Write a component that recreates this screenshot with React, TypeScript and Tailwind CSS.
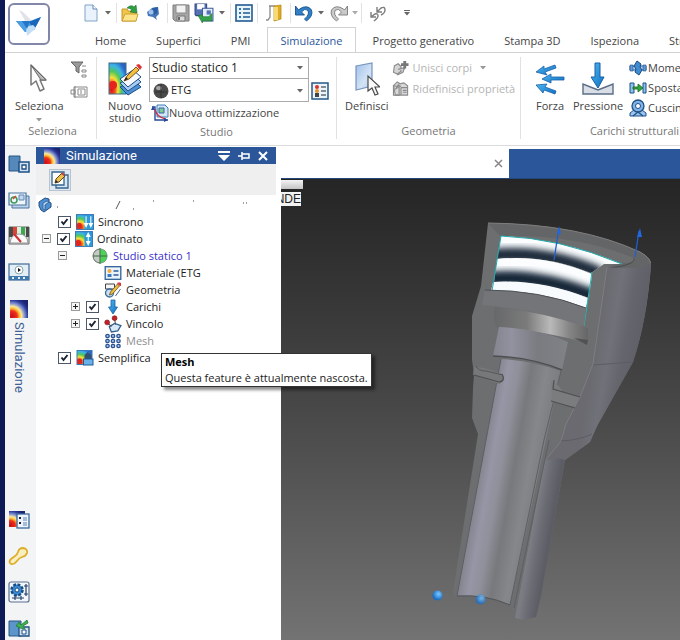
import { useState, type ReactNode } from 'react';

type IconProps = { className?: string };

const Caret = ({ className = 'text-[#666]' }: IconProps) => (
  <svg viewBox="0 0 6 4" className={`w-1.5 h-1 shrink-0 ${className}`}>
    <path d="M0 0h6L3 3.5z" fill="currentColor" />
  </svg>
);

// shared gradients, referenced by id from every icon
const Defs = () => (
  <svg className="w-0 h-0 absolute" aria-hidden="true">
    <defs>
      <radialGradient id="heat" cx="0.15" cy="0.85" r="1">
        <stop offset="0" stopColor="#d8121a" />
        <stop offset="0.2" stopColor="#f04a1c" />
        <stop offset="0.38" stopColor="#f6e23a" />
        <stop offset="0.58" stopColor="#4fc65a" />
        <stop offset="0.78" stopColor="#3bb4e8" />
        <stop offset="1" stopColor="#2b62c8" />
      </radialGradient>
      <radialGradient id="heatDark" cx="0.1" cy="0.9" r="1.05">
        <stop offset="0" stopColor="#c8101a" />
        <stop offset="0.28" stopColor="#f0301c" />
        <stop offset="0.4" stopColor="#fbb52e" />
        <stop offset="0.52" stopColor="#f8e89a" />
        <stop offset="0.68" stopColor="#7f8fd0" />
        <stop offset="0.85" stopColor="#2b3a9c" />
        <stop offset="1" stopColor="#1b2470" />
      </radialGradient>
      <linearGradient id="blue" x1="0" y1="0" x2="1" y2="1">
        <stop offset="0" stopColor="#4db8f2" />
        <stop offset="1" stopColor="#0f6fc0" />
      </linearGradient>
      <linearGradient id="glass" x1="0" y1="0" x2="1" y2="1">
        <stop offset="0" stopColor="#9fc0ea" />
        <stop offset="0.6" stopColor="#d3e3f6" />
        <stop offset="1" stopColor="#a9c6ec" />
      </linearGradient>
    </defs>
  </svg>
);

const LogoIcon = () => (
  <svg viewBox="0 0 36 36" className="w-9 h-9 shrink-0">
    <path d="M8 4l4 2 10 10-6 2z" fill="#dfe3e8" />
    <path d="M5 15l14 0-5 11z" fill="#2f8bdc" />
    <path d="M5 15h14l11-4-7 13-9 2z" fill="#4a9fe3" />
    <path d="M18 16l12-5-7 13z" fill="#1b66b8" />
    <path d="M15 21l7-2 3 3-9 8z" fill="#c3dff6" />
    <path d="M11 15h8l-3 8z" fill="#2277cb" />
  </svg>
);

const NewDocIcon = () => (
  <svg viewBox="0 0 14 18" className="w-3.5 h-4.5">
    <path d="M1 1h8l4 4v12H1z" fill="#eaf3fd" stroke="#7fa3c8" />
    <path d="M9 1v4h4" fill="#fff" stroke="#5f88b5" />
  </svg>
);

const OpenIcon = () => (
  <svg viewBox="0 0 18 18" className="w-4.5 h-4.5">
    <path d="M1 5h5l1 2h8v10H1z" fill="#f0c648" stroke="#c6962a" />
    <path d="M4 10h13l-2 7H1z" fill="#fbe489" stroke="#cfa236" />
    <path d="M6 4q4-4 7-1l2-2 1 8-7-1 2-2q-2-2-5-2z" fill="#2f9e41" stroke="#1c7030" strokeWidth=".6" />
  </svg>
);

const GlobeIcon = () => (
  <svg viewBox="0 0 14 14" className="w-3.5 h-3.5 shrink-0">
    <path d="M1 6l5-4 6-1 1 7-3 3 1 3-4-3-5-1z" fill="#4577b8" />
    <path d="M6 2l6-1-1 6-3 2z" fill="#2c5ea6" />
    <circle cx="5" cy="6" r="2.500" fill="#9ec2ea" />
  </svg>
);

const SaveIcon = () => (
  <svg viewBox="0 0 18 18" className="w-4.5 h-4.5">
    <path d="M1 1h16v16H3l-2-2z" fill="#a5a5a5" stroke="#7d7d7d" />
    <path d="M4 1h10v8H4z" fill="#f3f3f3" stroke="#8b8b8b" />
    <path d="M5 12h8v5H5z" fill="#dcdcdc" stroke="#777" />
    <path d="M6 13h2v3H6z" fill="#666" />
  </svg>
);

const SaveAsIcon = () => (
  <svg viewBox="0 0 19 19" className="w-5 h-5">
    <path d="M1 1h11v11H2l-1-1z" fill="#5570b4" stroke="#2f4684" />
    <path d="M3 1h7v5H3z" fill="#fff" />
    <path d="M8 5h10v12H8z" fill="#e5effb" stroke="#3b5a9c" />
    <path d="M12 7h4v4h-4z" fill="#4f72b8" />
    <path d="M4 12l4-1v2l6 0 3-3v7l-9 0v2z" fill="#35a34b" stroke="#1f7431" strokeWidth=".6" />
  </svg>
);

const ListIcon = () => (
  <svg viewBox="0 0 18 18" className="w-4.5 h-4.5">
    <rect x="1" y="1" width="16" height="16" fill="#eaf4fb" stroke="#235b91" strokeWidth="1.6" />
    <path d="M4 4h2v2H4zM4 8h2v2H4zM4 12h2v2H4z" fill="#2f74b5" />
    <path d="M8 5h7M8 9h7M8 13h7" stroke="#235b91" strokeWidth="1.3" />
  </svg>
);

const DoorIcon = () => (
  <svg viewBox="0 0 18 18" className="w-4.5 h-4.5">
    <path d="M4 2h6M5 2v11l-2 3H1" fill="none" stroke="#8a8a8a" strokeWidth="1.3" />
    <path d="M9 2l7-1v14l-7 2z" fill="#e0aa22" stroke="#b98b1d" strokeWidth=".8" />
    <path d="M9 3l4 0v13l-4 0z" fill="#f8da74" />
  </svg>
);

const UndoIcon = () => (
  <svg viewBox="0 0 19 18" className="w-5 h-4.5">
    <path d="M1 2v9h9l-3-3q3-4 6-2 3 4-3 9l2 2q7-5 5-11-4-6-12-1l-1 1z" fill="#2f80c8" stroke="#16508c" strokeWidth=".9" />
  </svg>
);

const RedoIcon = () => (
  <svg viewBox="0 0 19 18" className="w-5 h-4.5">
    <path d="M18 2v9H9l3-3q-3-4-6-2-3 4 3 9l-2 2Q0 12 2 6q4-6 12-1l1 1z" fill="#c9c9c9" stroke="#7a7a7a" strokeWidth=".9" />
  </svg>
);

const LinkArrowsIcon = () => (
  <svg viewBox="0 0 18 18" className="w-4.5 h-4.5" fill="none" stroke="#7d7d7d" strokeWidth="1.400">
    <path d="M8 3v5h5M8 8l4-4q4-2 4 2 0 3-4 5" />
    <path d="M2 8v5h5M2 13l4-3q3-1 3 2 0 2-4 5" />
  </svg>
);

const CursorIcon = () => (
  <svg viewBox="0 0 20 32" className="w-5 h-8">
    <path d="M2 2v20l5-4 4 10 4-2-4-9 6 0z" fill="#fdfdfd" stroke="#777" strokeWidth="1.5" strokeLinejoin="round" />
    <path d="M2 2l15 15-5 0z" fill="#b9b9b9" stroke="#666" />
  </svg>
);

const FilterIcon = () => (
  <svg viewBox="0 0 18 18" className="w-4.5 h-4.5">
    <path d="M1 1h12L9 6v6l-3-2V6z" fill="#9a9a9a" stroke="#666" />
    <path d="M12 5h4M12 9h4v2h-4zM12 14h4v2h-4z" fill="none" stroke="#888" />
  </svg>
);

const SelectBoxIcon = () => (
  <svg viewBox="0 0 18 14" className="w-4.5 h-3.5" fill="none" stroke="#888">
    <path d="M4 2h13v10H4zM8 4h7v6H8zM11 5v4M1 5h4v4H1zM5 1v12" />
  </svg>
);

const NewStudyIcon = () => (
  <svg viewBox="0 0 36 36" className="w-9 h-9">
    <rect x="2" y="2" width="17" height="31" fill="url(#heat)" stroke="#3f6a86" />
    <circle cx="6" cy="24" r="4" fill="#e52420" />
    <path d="M13 26l8 8 13-8-6-6z" fill="#4c8fd2" stroke="#1f4f8d" />
    <path d="M13 22l8 8 13-9-6-6z" fill="#a9cdf0" stroke="#1f4f8d" />
    <path d="M13 18l8 8 13-10-8-7z" fill="#f6fafe" stroke="#1f4f8d" />
    <path d="M17 20l3-5 9-9 3 3-10 9z" fill="#f4c044" stroke="#7c5618" />
    <path d="M17 20l2-4 2 2z" fill="#222" />
    <path d="M29 4l3-1 3 3-2 3z" fill="#e33030" />
  </svg>
);

const MaterialListIcon = () => (
  <svg viewBox="0 0 18 18" className="w-4.5 h-4.5">
    <rect x="1" y="1" width="16" height="16" fill="#e9f4fb" stroke="#255987" strokeWidth="1.5" />
    <circle cx="6" cy="5" r="2" fill="#d8342c" />
    <circle cx="6" cy="9" r="2" fill="#e8902c" />
    <path d="M4 11h4v4H4z" fill="#444" />
    <path d="M10 5h5M10 9h5M10 13h5" stroke="#222" />
  </svg>
);

const OptimizeIcon = () => (
  <svg viewBox="0 0 18 18" className="w-4.5 h-4.5">
    <path d="M1 3h3v13h13" fill="none" stroke="#27489a" strokeWidth="1.4" />
    <path d="M6 1h8l3 3v9H6z" fill="#d4e5f7" stroke="#3b7fb9" />
    <path d="M8 4h5v5H8z" fill="#7fcb8f" stroke="#3567a5" />
    <path d="M4 5q1 8 11 10" fill="none" stroke="#c92e3f" strokeWidth="1.4" />
    <path d="M0 6l2-4 2 4zM13 14l4 2-4 2z" fill="#27489a" />
  </svg>
);

const DefineIcon = () => (
  <svg viewBox="0 0 26 34" className="w-6.5 h-8.5">
    <path d="M2 4l16-3v23L2 28z" fill="url(#glass)" stroke="#7795bd" strokeWidth="1.2" />
    <path d="M14 14v15l4-3 3 7 3-1-3-7h5z" fill="#fafafa" stroke="#4a4a4a" strokeWidth="1.2" />
  </svg>
);

const JoinBodiesIcon = () => (
  <svg viewBox="0 0 18 17" className="w-4.5 h-4" fill="none" stroke="#8b8b8b" strokeWidth="1.2">
    <path d="M2 6l4-2 3 3v5l-4 3-4-2zM6 10l7-2-2 5-6 3" fill="#d4d4d4" />
    <path d="M13 1v8M9 5h8" stroke="#777" strokeWidth="3" />
  </svg>
);

const RedefineIcon = () => (
  <svg viewBox="0 0 18 17" className="w-4.5 h-4" fill="none" stroke="#8b8b8b" strokeWidth="1.2">
    <path d="M1 5l4-4 3 2 4-1 4 3v10H3z" fill="#d9d9d9" />
    <path d="M1 5l6 1v9H1zM9 7h7M9 7v8M11 10h4M11 12h4" />
    <path d="M3 9l3-5 3 2" fill="#999" />
  </svg>
);

const ForceIcon = () => (
  <svg viewBox="0 0 30 34" className="w-7.5 h-8.5" fill="url(#blue)" stroke="#1b5fa8" strokeWidth=".8">
    <path d="M1 10l8-6 0 3 11-4 1 3-11 4 2 3z" />
    <path d="M7 17l9-5v3h13v3H16v3z" />
    <path d="M1 23l11-1-2 3 11 4-1 3-11-4-1 3z" />
  </svg>
);

const PressureIcon = () => (
  <svg viewBox="0 0 32 34" className="w-8 h-8.5">
    <path d="M1 22v10h30V22l-10 4-5 2-5-2z" fill="#d9dde5" stroke="#5b6d86" strokeWidth="1.400" />
    <path d="M13 1h5v14h4l-6 11-7-11h4z" fill="url(#blue)" stroke="#1b5fa8" />
  </svg>
);

const MomentIcon = () => (
  <svg viewBox="0 0 18 16" className="w-4.5 h-4">
    <path d="M1 6h16v4H1z" fill="#bcd7f1" stroke="#28598f" />
    <path d="M8 1l4 3-1 3 2 3-3 5-4-3 1-3-2-3z" fill="#3f8bd2" stroke="#1b4c86" />
    <path d="M1 5h3v6H1zM14 5h3v6h-3z" fill="#5e9cd8" stroke="#1b4c86" strokeWidth=".6" />
  </svg>
);

const ShiftIcon = () => (
  <svg viewBox="0 0 18 16" className="w-4.5 h-4">
    <path d="M1 3h4v10H1zM14 3h3v10h-3z" fill="#8cc0ef" stroke="#1c4f86" />
    <path d="M4 7h5V4l5 4-5 4V9H4z" fill="#31a53c" stroke="#17691f" strokeWidth=".8" />
  </svg>
);

const BearingIcon = () => (
  <svg viewBox="0 0 18 18" className="w-4.5 h-4.5">
    <path d="M1 14l4-3h8l4 3v3H1z" fill="#9cc5ed" stroke="#1e4f88" />
    <circle cx="9" cy="7" r="6" fill="#7fb3e6" stroke="#1e4f88" strokeWidth="1.3" />
    <circle cx="9" cy="7" r="2.500" fill="#fff" stroke="#1e4f88" />
    <path d="M4 17l5-4 5 4" fill="none" stroke="#1e4f88" strokeWidth="1.3" />
  </svg>
);

const HeatIcon = ({ className = 'w-4.5 h-4' }: IconProps) => (
  <svg viewBox="0 0 18 18" preserveAspectRatio="none" className={className}>
    <rect width="18" height="18" fill="url(#heatDark)" />
  </svg>
);

const PartIcon = () => (
  <svg viewBox="0 0 14 16" className="w-3.5 h-4">
    <path d="M1 5l6-4 4 1v3l2 1v4l-7 5-3-2-2-4z" fill="#4f8fd0" stroke="#1d4c88" />
    <path d="M5 6l4-2 2 1-4 3v5l-2-1z" fill="#b4d4f2" stroke="#1d4c88" strokeWidth=".7" />
  </svg>
);

const SyncIcon = () => (
  <svg viewBox="0 0 17 15" className="w-4.5 h-4">
    <rect x=".5" y=".5" width="16" height="14" fill="url(#heat)" stroke="#3a79b8" />
    <rect x="8" y="1" width="8" height="13" fill="#2c9bdc" />
    <circle cx="3" cy="11" r="2.500" fill="#e0261e" />
    <path d="M9.500 2v9M14 2v9M8 9l1.500 3L11 9zM12.500 9L14 12l1.500-3z" stroke="#fff" fill="#fff" />
  </svg>
);

const OrderedIcon = () => (
  <svg viewBox="0 0 17 15" className="w-4.5 h-4">
    <rect x=".5" y=".5" width="16" height="14" fill="url(#heat)" stroke="#3a79b8" />
    <rect x="9" y="1" width="7" height="13" fill="#2c9bdc" />
    <circle cx="3" cy="11" r="2.500" fill="#e0261e" />
    <path d="M12.500 3v9M11 5l1.500-3L14 5zM11 10l1.500 3 1.500-3z" stroke="#fff" fill="#fff" />
  </svg>
);

const StudyIcon = () => (
  <svg viewBox="0 0 16 16" className="w-4.5 h-4">
    <circle cx="8" cy="8" r="7" fill="#c5c9c5" stroke="#5f6b60" />
    <path d="M8 1a7 7 0 0 1 0 14z" fill="#4fd05a" />
    <path d="M8 0v16M1 8h14" stroke="#3c6a40" />
  </svg>
);

const MaterialIcon = () => (
  <svg viewBox="0 0 17 14" className="w-4.5 h-3.5">
    <rect x=".7" y=".7" width="15.600" height="12.600" fill="#eaf3fc" stroke="#2f6196" strokeWidth="1.3" />
    <circle cx="5" cy="5" r="2" fill="#f0a93a" />
    <path d="M3 8h4v3H3z" fill="#3b78c2" />
    <path d="M9 5h5M9 9h5" stroke="#2c5d94" strokeWidth="1.400" />
  </svg>
);

const GeometryIcon = () => (
  <svg viewBox="0 0 17 16" className="w-4.5 h-4">
    <path d="M1 2h9v5H1z" fill="#f4f6f8" stroke="#444" />
    <circle cx="5" cy="11" r="4" fill="#c7def3" stroke="#3f6a96" strokeWidth="1.300" />
    <path d="M6 10l7-8 2 2-7 8-3 1z" fill="#f0bf43" stroke="#6a5020" strokeWidth=".8" />
    <path d="M13 1l3 0 0 3z" fill="#d8343a" stroke="#d8343a" />
    <path d="M11 14l5-7" stroke="#4b6a92" />
  </svg>
);

const LoadIcon = () => (
  <svg viewBox="0 0 17 16" className="w-4.5 h-4">
    <path d="M6.500 1h4v7H13l-4.500 7L4 8h2.500z" fill="url(#blue)" stroke="#1f5fa6" strokeWidth=".8" />
  </svg>
);

const ConstraintIcon = () => (
  <svg viewBox="0 0 17 17" className="w-4.5 h-4.5">
    <path d="M5 11l5-3 6 2-3 5-6 1z" fill="#d8e9f8" stroke="#34608f" strokeWidth="1.200" />
    <path d="M3 7l4 4M10 4l1 5" stroke="#555" />
    <circle cx="3" cy="7" r="2.300" fill="#c5202a" stroke="#7a1118" strokeWidth=".6" />
    <circle cx="10" cy="3" r="2.300" fill="#c5202a" stroke="#7a1118" strokeWidth=".6" />
  </svg>
);

const MeshIcon = () => (
  <svg viewBox="0 0 17 16" className="w-4.5 h-4" fill="#a9c6ea" stroke="#2c5490" strokeWidth="1.300">
    {[3, 8.5, 14].map((x) => [3, 8, 13].map((y) => <circle key={`${x}-${y}`} cx={x} cy={y} r="1.700" />))}
  </svg>
);

const SimplifyIcon = () => (
  <svg viewBox="0 0 17 16" className="w-4.5 h-4">
    <rect x=".5" y=".5" width="15" height="14" fill="url(#heat)" stroke="#3a79b8" />
    <circle cx="3" cy="11" r="2.500" fill="#e0261e" />
    <path d="M8 5l3-3 4 3v4H8z" fill="#35506e" />
    <rect x="7" y="9" width="9.500" height="6" fill="#69b1ea" stroke="#1f5b96" />
  </svg>
);

const railSvg = 'w-5.5 h-5';

const RailPartsIcon = () => (
  <svg viewBox="0 0 22 20" className={railSvg}>
    <path d="M1 2h11v15H1z" fill="#5589bb" stroke="#2b5784" />
    <path d="M11 8h10v10H11z" fill="#cfe2f4" stroke="#1f4f83" strokeWidth="1.500" />
    <path d="M14 11h4v4h-4z" fill="#fff" stroke="#1f4f83" strokeWidth="1.300" />
  </svg>
);

const RailLayersIcon = () => (
  <svg viewBox="0 0 22 20" className={railSvg}>
    <path d="M4 6h17v12H4z" fill="#bdd3ea" stroke="#4a759f" />
    <path d="M1 3h17v12H1z" fill="#f1f6fb" stroke="#4a759f" strokeWidth="1.200" />
    <circle cx="6" cy="10" r="3" fill="none" stroke="#3c9a56" strokeWidth="1.500" />
    <path d="M8 6l-3 3" stroke="#d4472d" strokeWidth="1.500" />
    <path d="M11 5h5v5h-5z" fill="#c4d9ee" stroke="#5e88b3" />
  </svg>
);

const RailGaugeIcon = () => (
  <svg viewBox="0 0 22 20" className={railSvg}>
    <path d="M1 1h20v17H1z" fill="#d9d9d9" stroke="#676767" />
    <path d="M1 1h4v10H1zM18 1h3v10h-3z" fill="#4a4a4a" />
    <path d="M5 1h4v8H5z" fill="#da4438" />
    <path d="M9 1h4v8H9z" fill="#d8f0dc" />
    <path d="M13 1h4v9h-4z" fill="#40a653" />
    <path d="M2 17q1-9 9-9t9 9z" fill="#fafafa" stroke="#999" />
    <path d="M6 8l7 8" stroke="#cf2f35" strokeWidth="2" />
  </svg>
);

const RailPlayIcon = () => (
  <svg viewBox="0 0 22 20" className={railSvg}>
    <rect x="1" y="2" width="20" height="16" fill="#e4eef7" stroke="#4a769f" strokeWidth="1.300" />
    <path d="M1 14h20v4H1z" fill="#3f78ad" />
    <circle cx="11" cy="8" r="4" fill="#fff" stroke="#8aa" />
    <path d="M10 6l3 2-3 2z" fill="#111" />
    <path d="M4 15h2v2H4zM10 15h2v2h-2zM15 15h2v2h-2z" fill="#e4eef7" />
  </svg>
);

const RailReportIcon = () => (
  <svg viewBox="0 0 22 20" className={railSvg}>
    <rect x="1" y="1" width="16" height="16" fill="url(#heatDark)" />
    <rect x="9" y="4" width="12" height="14" fill="#edf4fb" stroke="#3c6a9c" strokeWidth="1.300" />
    <path d="M11 8h2M11 13h2" stroke="#223" strokeWidth="2" />
    <path d="M15 8h4M15 10h4M15 13h4M15 15h4" stroke="#5c87b5" />
  </svg>
);

const RailWrenchIcon = () => (
  <svg viewBox="0 0 22 20" className={railSvg}>
    <path d="M10 6q1-4 5-4 5 1 4 5-1 3-5 4-3 1-5 4-3 4-6 3-3-2 0-5l4-3q2-1 3-4z" fill="#f8efc0" stroke="#dfae28" strokeWidth="1.800" />
  </svg>
);

const RailGearIcon = () => (
  <svg viewBox="0 0 22 22" className="w-5.5 h-5.5">
    <rect x="1" y="1" width="20" height="20" rx="2" fill="#f3f7fb" stroke="#5a718d" strokeWidth="1.200" />
    <path d="M4 17h12M7 15v4M13 15v4M18 3v12M16 5h4M16 13h4" stroke="#25406a" strokeWidth="1.200" />
    <circle cx="9" cy="9" r="5.500" fill="#3a8bd3" />
    <circle cx="9" cy="9" r="5.500" fill="none" stroke="#184c84" strokeWidth="2.500" strokeDasharray="2.800 1.500" />
    <circle cx="9" cy="9" r="2" fill="#fff" stroke="#184c84" />
  </svg>
);

const RailRecycleIcon = () => (
  <svg viewBox="0 0 22 20" className={railSvg}>
    <path d="M1 3h12v15H1z" fill="#5b95cb" stroke="#2b5784" />
    <path d="M11 9h10v9H11z" fill="#cfe2f4" stroke="#1f4f83" strokeWidth="1.300" />
    <path d="M14 12h4v4h-4z" fill="#fff" stroke="#1f4f83" />
    <path d="M8 8l3-4 2 3 6-5 1 3-5 3 2 3-5-1z" fill="#3fae55" stroke="#1f7d36" strokeWidth=".8" />
  </svg>
);

const EditSketchIcon = () => (
  <svg viewBox="0 0 18 18" className="w-4.5 h-4.5">
    <path d="M5 4h12v13H5z" fill="#d6e6f5" stroke="#33658f" strokeWidth="1.300" />
    <path d="M1 1h12v13H1z" fill="#fff" stroke="#33658f" strokeWidth="1.300" />
    <path d="M4 12l1-4 6-6 3 3-6 6z" fill="#efc04d" stroke="#5d4519" />
    <path d="M4 12l1-3 2 2z" fill="#222" />
    <path d="M10 3l1-2 3 3-1 1z" fill="#c83d3d" />
  </svg>
);

const Checkbox = ({ id }: { id: string }) => {
  const [checked, setChecked] = useState(true);
  return (
    <span className="grid shrink-0">
      <input
        id={id}
        type="checkbox"
        checked={checked}
        onChange={() => setChecked(!checked)}
        className="col-start-1 row-start-1 appearance-none w-[13px] h-3 bg-white border border-[#4d5866]"
      />
      {checked && (
        <svg viewBox="0 0 13 12" className="col-start-1 row-start-1 w-[13px] h-3 pointer-events-none">
          <path d="M3.500 5.500l2 2.500 4-5" fill="none" stroke="#1c2430" strokeWidth="2" />
        </svg>
      )}
    </span>
  );
};

const Expander = ({ open, name }: { open: boolean; name: string }) => (
  <button type="button" aria-label={name} aria-expanded={open} className="shrink-0 w-[9px] h-[9px]">
    <svg viewBox="0 0 9 9" className="w-[9px] h-[9px]">
      <rect x=".5" y=".5" width="8" height="8" fill="#f6f6f6" stroke="#9a9a9a" />
      <path d={open ? 'M2 4.500h5' : 'M2 4.500h5M4.500 2v5'} stroke="#222" />
    </svg>
  </button>
);

interface TreeNode {
  label: string;
  pad: string;
  icon: ReactNode;
  open?: boolean;
  check?: boolean;
  gap?: string;
  color?: string;
}

const treeNodes: TreeNode[] = [
  { label: 'Sincrono', pad: 'pl-[22px]', icon: <SyncIcon />, check: true },
  { label: 'Ordinato', pad: 'pl-1.5', icon: <OrderedIcon />, check: true, open: true, gap: 'mr-1.5' },
  { label: 'Studio statico 1', pad: 'pl-[22px]', icon: <StudyIcon />, open: true, gap: 'mr-6', color: 'text-[#3a30c8]' },
  { label: 'Materiale (ETG', pad: 'pl-[68px]', icon: <MaterialIcon /> },
  { label: 'Geometria', pad: 'pl-[68px]', icon: <GeometryIcon /> },
  { label: 'Carichi', pad: 'pl-[35px]', icon: <LoadIcon />, check: true, open: false, gap: 'mr-1.5' },
  { label: 'Vincolo', pad: 'pl-[35px]', icon: <ConstraintIcon />, check: true, open: false, gap: 'mr-1.5' },
  { label: 'Mesh', pad: 'pl-[68px]', icon: <MeshIcon />, color: 'text-[#8e8e8e]' },
  { label: 'Semplifica', pad: 'pl-[22px]', icon: <SimplifyIcon />, check: true },
];

const quickActions: { name: string; width: string; icon: ReactNode }[] = [
  { name: 'Nuovo', width: 'w-5.5', icon: <NewDocIcon /> },
  { name: 'Altri modelli', width: 'w-3', icon: <Caret /> },
  { name: '', width: 'w-px', icon: null },
  { name: 'Apri', width: 'w-5.5', icon: <OpenIcon /> },
  { name: 'Server', width: 'w-6', icon: <GlobeIcon /> },
  { name: '', width: 'w-px', icon: null },
  { name: 'Salva', width: 'w-5.5', icon: <SaveIcon /> },
  { name: 'Salva con nome', width: 'w-6', icon: <SaveAsIcon /> },
  { name: 'Opzioni di salvataggio', width: 'w-3', icon: <Caret /> },
  { name: '', width: 'w-px', icon: null },
  { name: 'Elenco', width: 'w-5.5', icon: <ListIcon /> },
  { name: '', width: 'w-px', icon: null },
  { name: 'Chiudi', width: 'w-7', icon: <DoorIcon /> },
  { name: '', width: 'w-px', icon: null },
  { name: 'Annulla', width: 'w-5.5', icon: <UndoIcon /> },
  { name: 'Elenco annulla', width: 'w-3', icon: <Caret /> },
  { name: 'Ripeti', width: 'w-6', icon: <RedoIcon /> },
  { name: 'Elenco ripeti', width: 'w-2', icon: <Caret className="text-[#aaa]" /> },
  { name: '', width: 'w-px', icon: null },
  { name: 'Collegamenti', width: 'w-7', icon: <LinkArrowsIcon /> },
];

const tabs = ['Home', 'Superfici', 'PMI', 'Simulazione', 'Progetto generativo', 'Stampa 3D', 'Ispeziona', 'Strumenti'];

const GroupCaption = ({ children }: { children: ReactNode }) => (
  <div className="mt-auto text-center text-[#777] whitespace-nowrap">{children}</div>
);

const BigButton = ({ icon, label, className = '' }: { icon: ReactNode; label: string; className?: string }) => (
  <button type="button" className={`flex flex-col items-center pt-0.5 ${className}`}>
    <span className="h-[41px] pb-0.5 flex items-center justify-center">{icon}</span>
    <span className="leading-3 text-center">{label}</span>
  </button>
);

const Header = () => (
  <header className="bg-white text-[#444] shrink-0">
    <div className="flex border-b border-[#d2d2d2] h-[53px]">
      <button type="button" aria-label="Menu applicazione" className="w-[42px] h-[42px] ml-[3px] mt-[3px] mr-[30px] shrink-0 border-2 border-[#8187a8] rounded-md flex items-center justify-center">
        <LogoIcon />
      </button>
      <div className="flex flex-col min-w-0">
        <div className="flex items-center h-[27px]">
          {quickActions.map((a, i) =>
            a.icon ? (
              <button key={i} type="button" aria-label={a.name} className={`${a.width} h-6 flex items-center justify-center shrink-0`}>
                {a.icon}
              </button>
            ) : (
              <span key={i} className="mx-0.5 w-px h-5 bg-[#e2e2e2] shrink-0" />
            ),
          )}
          <button type="button" aria-label="Personalizza" className="ml-3 flex flex-col items-center gap-px">
            <span className="w-1.5 h-px bg-[#666]" />
            <Caret />
          </button>
        </div>
        <nav className="flex gap-1 mt-px pl-0.5">
          {tabs.map((tab) => (
            <button
              key={tab}
              type="button"
              className={`h-[25px] px-3 pt-0.5 whitespace-nowrap border border-b-0 ${
                tab === 'Simulazione' ? 'bg-white border-[#d2d2d2] text-[#2b579a]' : 'border-transparent'
              }`}
            >
              {tab}
            </button>
          ))}
        </nav>
      </div>
    </div>

    <div className="flex h-[92px] pt-1 pb-1.5">
      <section className="flex flex-col w-[91px] pl-1 shrink-0">
        <div className="flex">
          <div className="flex flex-col items-center ml-1.5">
            <BigButton icon={<CursorIcon />} label="Seleziona" />
            <span className="mt-1.5"><Caret className="text-[#999]" /></span>
          </div>
          <div className="flex flex-col gap-1.5 ml-1.5 pt-1">
            <button type="button" aria-label="Filtro"><FilterIcon /></button>
            <button type="button" aria-label="Casella"><SelectBoxIcon /></button>
          </div>
        </div>
        <GroupCaption>Seleziona</GroupCaption>
      </section>

      <section className="flex flex-col w-[240px] shrink-0 border-l border-[#e1e1e1]">
        <div className="flex">
          <BigButton icon={<NewStudyIcon />} label="Nuovo studio" className="w-12 ml-1" />
          <div className="flex flex-col">
            <div className="grid w-40">
              <select aria-label="Studio" className="col-start-1 row-start-1 appearance-none h-[22px] px-0.5 border border-[#ababab] text-xs font-medium text-[#222] bg-white">
                <option>Studio statico 1</option>
              </select>
              <span className="col-start-1 row-start-1 justify-self-end self-center mr-1.5 pointer-events-none"><Caret /></span>
            </div>
            <div className="flex items-center">
              <div className="grid w-40">
                <select aria-label="Materiale" className="col-start-1 row-start-1 appearance-none h-[23px] pl-[21px] border border-t-0 border-[#ababab] text-[#222] bg-white">
                  <option>ETG</option>
                </select>
                <svg viewBox="0 0 16 16" className="col-start-1 row-start-1 w-4 h-4 ml-1 self-center pointer-events-none">
                  <circle cx="8" cy="8" r="7.500" fill="#4b4b4b" />
                  <ellipse cx="6" cy="5" rx="3" ry="2" fill="#a5a5a5" />
                  <path d="M8 1v14M2 9h12" stroke="#333" />
                </svg>
                <span className="col-start-1 row-start-1 justify-self-end self-center mr-1.5 pointer-events-none"><Caret /></span>
              </div>
              <button type="button" aria-label="Tabella materiali" className="ml-0.5"><MaterialListIcon /></button>
            </div>
            <button type="button" className="flex items-center ml-0.5 mt-0.5 whitespace-nowrap">
              <OptimizeIcon />
              Nuova ottimizzazione
            </button>
          </div>
        </div>
        <GroupCaption>Studio</GroupCaption>
      </section>

      <section className="flex flex-col w-[184px] shrink-0 border-l border-[#e1e1e1]">
        <div className="flex">
          <BigButton icon={<DefineIcon />} label="Definisci" className="ml-2" />
          <div className="flex flex-col text-[#b5b5b5] whitespace-nowrap ml-1">
            <button type="button" disabled className="flex items-center gap-0.5 h-5.5">
              <JoinBodiesIcon />
              Unisci corpi
              <Caret className="text-[#999] ml-1.5" />
            </button>
            <button type="button" disabled className="flex items-center gap-0.5 h-5">
              <RedefineIcon />
              Ridefinisci proprietà
            </button>
          </div>
        </div>
        <GroupCaption>Geometria</GroupCaption>
      </section>

      <section className="flex flex-col w-[228px] shrink-0 border-l border-[#e1e1e1]">
        <div className="flex">
          <BigButton icon={<ForceIcon />} label="Forza" className="ml-3.5" />
          <BigButton icon={<PressureIcon />} label="Pressione" className="ml-2" />
          <div className="flex flex-col whitespace-nowrap ml-1.5 pt-px">
            <button type="button" className="flex items-center gap-px h-5"><MomentIcon />Momento</button>
            <button type="button" className="flex items-center gap-px h-5"><ShiftIcon />Spostamento</button>
            <button type="button" className="flex items-center gap-px h-5"><BearingIcon />Cuscinetto</button>
          </div>
        </div>
        <GroupCaption>Carichi strutturali</GroupCaption>
      </section>
    </div>
  </header>
);

const railButton = 'h-9 w-full flex items-center justify-center shrink-0';

const SideRail = () => (
  <nav className="w-[31px] shrink-0 bg-[#f3f4f6] flex flex-col items-center pr-1 overflow-hidden">
    <button type="button" aria-label="Parti" className={railButton}><RailPartsIcon /></button>
    <button type="button" aria-label="Livelli" className={railButton}><RailLayersIcon /></button>
    <button type="button" aria-label="Sensori" className={railButton}><RailGaugeIcon /></button>
    <button type="button" aria-label="Riproduzione" className={railButton}><RailPlayIcon /></button>
    <button type="button" className="flex flex-col items-center pt-2.5 gap-1 shrink-0 mb-[109px]">
      <HeatIcon className="w-4.5 h-4.5" />
      <span className="[writing-mode:vertical-rl] font-['Roboto'] text-[13px] leading-4 text-[#3f6093]">Simulazione</span>
    </button>
    <button type="button" aria-label="Rapporto" className={railButton}><RailReportIcon /></button>
    <button type="button" aria-label="Strumenti" className={railButton}><RailWrenchIcon /></button>
    <button type="button" aria-label="Ingranaggi" className={railButton}><RailGearIcon /></button>
    <button type="button" aria-label="Riciclo" className={railButton}><RailRecycleIcon /></button>
  </nav>
);

const SimulationPanel = () => (
  <aside className="w-[240px] shrink-0 bg-white flex flex-col pt-px">
    <div className="flex items-center h-[17px] bg-[#2b579a] text-white pl-2 pr-2">
      <HeatIcon className="w-4 h-4" />
      <h2 className="font-['Roboto'] text-[13px] ml-1.5 leading-4">Simulazione</h2>
      <div className="ml-auto flex items-center gap-2">
        <button type="button" aria-label="Opzioni pannello">
          <svg viewBox="0 0 12 10" className="w-3 h-2.5"><path d="M0 0h12v2H0zM0 4h12L6 10z" fill="#fff" /></svg>
        </button>
        <button type="button" aria-label="Blocca">
          <svg viewBox="0 0 12 10" className="w-3 h-2.5" fill="none" stroke="#fff" strokeWidth="1.500"><path d="M0 5h4M4 1v8M4 3h7v4H4" /></svg>
        </button>
        <button type="button" aria-label="Chiudi pannello">
          <svg viewBox="0 0 10 10" className="w-2.5 h-2.5"><path d="M1 1l8 8M9 1L1 9" stroke="#fff" strokeWidth="2" /></svg>
        </button>
      </div>
    </div>
    <div className="h-[31px] bg-[#efefef] flex items-center pl-[13px]">
      <button type="button" aria-label="Modifica" className="w-5.5 h-5.5 border border-[#b8c4d2] bg-[#dfe8f1] flex items-center justify-center">
        <EditSketchIcon />
      </button>
    </div>
    <ul className="pt-px text-[#1c1c1c]">
      <li className="h-[17px] flex items-center pl-0.5">
        <PartIcon />
        <svg viewBox="0 0 200 14" className="w-[200px] h-3.5 ml-1">
          <path d="M60 11l4-8" stroke="#555" />
          <path d="M1 9h1M77 11h1M97 3h1M137 3h1M187 5h1M190 5h1" stroke="#444" />
        </svg>
      </li>
      {treeNodes.map((node) => (
        <li key={node.label} className={`h-[17px] flex items-center ${node.pad}`}>
          {node.open !== undefined && (
            <span className={`flex ${node.gap}`}><Expander open={node.open} name={node.label} /></span>
          )}
          {node.check && <Checkbox id={node.label} />}
          <label htmlFor={node.check ? node.label : undefined} className={`flex items-center gap-1 whitespace-nowrap ${node.check ? 'ml-[5px]' : ''} ${node.color ?? ''}`}>
            {node.icon}
            {node.label}
          </label>
        </li>
      ))}
    </ul>
  </aside>
);

// cutaway of the turned part, lit from the left
const Model = () => (
  <svg viewBox="281 179 399 461" className="w-full h-full">
    <defs>
      <linearGradient id="bore" gradientUnits="userSpaceOnUse" x1="478" y1="480" x2="546" y2="492">
        <stop offset="0" stopColor="#84858f" />
        <stop offset="0.15" stopColor="#9696a6" />
        <stop offset="0.3" stopColor="#8f909a" />
        <stop offset="0.48" stopColor="#77797c" />
        <stop offset="0.7" stopColor="#85878a" />
        <stop offset="1" stopColor="#76787c" />
      </linearGradient>
      <linearGradient id="outer" gradientUnits="userSpaceOnUse" x1="602" y1="310" x2="648" y2="318">
        <stop offset="0" stopColor="#6a6a70" />
        <stop offset="0.3" stopColor="#71717a" />
        <stop offset="0.6" stopColor="#65656e" />
        <stop offset="1" stopColor="#5e5e66" />
      </linearGradient>
      <linearGradient id="stem" gradientUnits="userSpaceOnUse" x1="532" y1="536" x2="556" y2="540">
        <stop offset="0" stopColor="#7b7b83" />
        <stop offset="0.3" stopColor="#6c6c74" />
        <stop offset="0.7" stopColor="#5d5d66" />
        <stop offset="1" stopColor="#5a5a62" />
      </linearGradient>
      <linearGradient id="collar" x1="0" y1="0" x2="1" y2="0">
        <stop offset="0" stopColor="#85858f" />
        <stop offset="0.25" stopColor="#9292a0" />
        <stop offset="0.6" stopColor="#7a7b80" />
        <stop offset="1" stopColor="#808286" />
      </linearGradient>
      <linearGradient id="cone" x1="0" y1="0" x2="1" y2="0">
        <stop offset="0" stopColor="#67686a" />
        <stop offset="0.35" stopColor="#7b7b7b" />
        <stop offset="0.6" stopColor="#b9b9b9" />
        <stop offset="0.8" stopColor="#858585" />
        <stop offset="1" stopColor="#666" />
      </linearGradient>
      <radialGradient id="ball" cx="0.6" cy="0.35" r="0.6">
        <stop offset="0" stopColor="#7cc8ff" />
        <stop offset="1" stopColor="#176bc4" />
      </radialGradient>
      <filter id="soft" x="-20%" y="-60%" width="140%" height="220%">
        <feGaussianBlur stdDeviation="3" />
      </filter>
      <clipPath id="threadTop">
        <path d="M501 236Q560 238 622 264L604 264L591 273Q545 254 497 259Z" />
      </clipPath>
      <clipPath id="threadMid">
        <path d="M497 259Q545 254 592 274L589 298Q540 280 494 282Z" />
      </clipPath>
    </defs>

    {/* section body */}
    <path d="M488 223Q580 224 640 252Q652 258 651 266Q647 320 633 362L597 426L590 442L565 460L541 596L536 617L522 620L511 617L510 605Q485 595 455 597L453 592L478 434L472 418L473 388L474 374L472 360L472 316L481 286Z" fill="#6d6e6f" />
    {/* rim */}
    <path d="M488 223Q580 224 640 252Q653 259 650 266Q640 272 607 267L618 264Q640 262 634 258Q575 234 500 236Z" fill="#646566" />
    <path d="M488 223Q580 224 640 252Q653 259 650 266" fill="none" stroke="#7d7d7e" />
    <path d="M634 258Q636 265 609 268" fill="none" stroke="#4b4b4e" />
    {/* outer surface */}
    <path d="M607 267Q640 271 651 263Q647 320 633 362L597 426L590 442L565 460L545 461L561 441L566 424L580 397L593 364Z" fill="url(#outer)" />
    <path d="M545 461Q556 456 565 460L541 596L536 617L522 620L515 618Z" fill="url(#stem)" />
    <path d="M607 267L593 364L580 397L566 424L561 441L545 461L516 617" fill="none" stroke="#7d7d82" />
    <path d="M593 365L633 362" stroke="#5d5d66" />
    <path d="M561 441Q580 440 592 434" fill="none" stroke="#5c5c65" />

    {/* thread */}
    <g clipPath="url(#threadTop)">
      <path d="M490 230h140v50H490z" fill="#fbfdff" />
      <path d="M490 256Q545 250 600 274" fill="none" stroke="#1c2b3a" strokeWidth="14" filter="url(#soft)" />
    </g>
    <g clipPath="url(#threadMid)">
      <path d="M490 250h110v50H490z" fill="#fbfdff" />
      <path d="M488 279Q540 274 596 298" fill="none" stroke="#182737" strokeWidth="15" filter="url(#soft)" />
    </g>
    <path d="M493 282Q540 279 588 298L586 308Q540 290 491 291Z" fill="#f7fbfd" />
    <path d="M622 264Q560 238 501 236L492 291" fill="none" stroke="#20a9ac" />
    <path d="M592 272L584 326" stroke="#20b9b6" />

    {/* shoulders */}
    <path d="M485 290Q540 290 586 308L584 327Q535 309 482 305Z" fill="#747578" />
    <path d="M485 290Q540 290 586 308" fill="none" stroke="#4e5052" />
    <path d="M495 307Q540 311 583 326L588 329L588 343Q540 330 497 328Q492 318 495 307Z" fill="url(#cone)" />
    <path d="M574 338L588 340L587 345Z" fill="#515253" />
    <path d="M499 327Q540 329 568 342L562 370Q530 357 493 356Z" fill="url(#collar)" />
    <path d="M493 356Q530 357 562 370" fill="none" stroke="#4d4e52" strokeWidth="1.400" />

    {/* bore */}
    <path d="M501 359Q530 360 561 371L548 430L510 605Q485 594 457 596L489 424Z" fill="url(#bore)" />
    <path d="M501 359L489 424L457 596M561 371L544 440L510 605M549 440L514 608" fill="none" stroke="#5e5f64" />
    <path d="M457 596Q485 594 510 605" fill="none" stroke="#515257" />

    {/* grooves */}
    <path d="M474 367Q482 366 502 374Q506 381 499 384L480 377L473 375Z" fill="#77787a" />
    <path d="M474 375L499 382Q506 381 502 374" fill="none" stroke="#4c4d4f" strokeWidth="1.200" />
    <path d="M476 366Q478 371 486 371L503 375" fill="none" stroke="#555658" />
    <path d="M551 382Q555 379 563 392L580 397L575 407L552 402Z" fill="#7b7c7e" />
    <path d="M554 380L553 389L580 397M551 401L575 408" fill="none" stroke="#505154" strokeWidth="1.200" />

    {/* load arrows and reference points */}
    <path d="M559 228L554 260M639 231L635 257" stroke="#1f5fd0" strokeWidth="1.300" />
    <path d="M559 226l2 8h-4zM640 228l2 9h-5z" fill="#1f66e0" />
    <circle cx="437.500" cy="595.500" r="5" fill="url(#ball)" />
    <circle cx="480.500" cy="599.500" r="5" fill="url(#ball)" opacity="0.8" />
  </svg>
);

const Viewport = () => (
  <main className="flex-1 min-w-0 flex flex-col pt-[3px] ml-[5px]">
    <div className="h-[30px] shrink-0 flex bg-[#2b579a] border-b border-[#24487c]">
      <div className="w-[228px] bg-white flex items-center justify-end pr-1.5">
        <button type="button" aria-label="Chiudi documento">
          <svg viewBox="0 0 9 9" className="w-[9px] h-[9px]"><path d="M1 1l7 7M8 1L1 8" stroke="#888" strokeWidth="1.500" /></svg>
        </button>
      </div>
    </div>
    <div className="flex-1 min-h-0 relative overflow-hidden bg-linear-to-b from-[#252525] via-[#484848] to-[#737373]">
      <Model />
      <div className="absolute top-0 left-0 flex flex-col items-start">
        <div className="w-5.5 h-[9px] mt-px bg-linear-to-b from-[#f4f4f4] to-[#c4c4c4]" />
        <div className="mt-[3px] w-5 h-3.5 bg-[#f2f2f2] overflow-hidden flex justify-end font-['Liberation_Sans'] text-xs leading-3.5 text-[#222]">NDE</div>
      </div>
    </div>
  </main>
);

export default function App() {
  return (
    <div className="flex h-screen overflow-hidden bg-white text-[11px] leading-4 font-['Open_Sans','Noto_Sans',sans-serif]">
      <Defs />
      <div className="w-[5px] shrink-0 bg-[#0e1a56]" />
      <div className="flex-1 min-w-0 flex flex-col">
        <Header />
        <div className="flex-1 min-h-0 flex relative border-t border-[#dcdcdc]">
          <SideRail />
          <SimulationPanel />
          <Viewport />
          <div role="tooltip" className="absolute left-[156px] top-[207px] bg-white border border-[#333] shadow-[3px_3px_3px_rgba(0,0,0,0.45)] px-[3px] text-[#222] whitespace-nowrap">
            <div className="font-bold text-black">Mesh</div>
            <div>Questa feature è attualmente nascosta.</div>
          </div>
        </div>
      </div>
    </div>
  );
}
